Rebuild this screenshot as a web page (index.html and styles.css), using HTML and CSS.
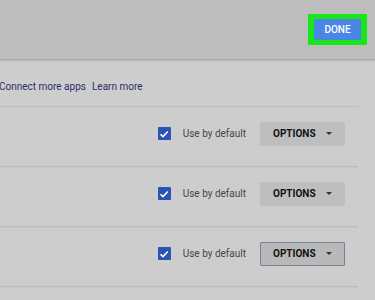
FILE: index.html
```html
<!DOCTYPE html>
<html>
<head>
<meta charset="utf-8">
<link rel="stylesheet" href="styles.css">
</head>
<body>
<header class="topbar">
  <div class="done-ring"><button class="done">DONE</button></div>
</header>
<div class="links"><span class="link">Connect more apps</span><span class="link">Learn more</span></div>
<div class="rows">
  <div class="row">
    <span class="check"><svg viewBox="0 0 12 12" width="12" height="12"><path d="M2.5 6.2 L5 8.6 L9.8 3.6" fill="none" stroke="#fff" stroke-width="1.5"/></svg></span>
    <span class="label">Use by default</span>
    <button class="options">OPTIONS<span class="caret"></span></button>
  </div>
  <div class="row">
    <span class="check"><svg viewBox="0 0 12 12" width="12" height="12"><path d="M2.5 6.2 L5 8.6 L9.8 3.6" fill="none" stroke="#fff" stroke-width="1.5"/></svg></span>
    <span class="label">Use by default</span>
    <button class="options">OPTIONS<span class="caret"></span></button>
  </div>
  <div class="row">
    <span class="check"><svg viewBox="0 0 12 12" width="12" height="12"><path d="M2.5 6.2 L5 8.6 L9.8 3.6" fill="none" stroke="#fff" stroke-width="1.5"/></svg></span>
    <span class="label">Use by default</span>
    <button class="options focused">OPTIONS<span class="caret"></span></button>
  </div>
</div>
</body>
</html>
```
FILE: styles.css
```css
html, body {
  margin: 0;
  padding: 0;
  background: #cdcdcd;
  font-family: Roboto, "Liberation Sans", sans-serif;
  width: 375px;
  height: 300px;
  overflow: hidden;
}
.topbar {
  height: 60px;
  background: #bdbdbd;
  border-bottom: 1px solid #a9a9a9;
  box-shadow: 0 1px 2px rgba(0,0,0,0.12);
  display: flex;
  justify-content: flex-end;
  align-items: flex-start;
  padding-right: 8px;
  box-sizing: border-box;
}
.done-ring {
  margin-top: 14px;
  background: #19e619;
  padding: 5px 6px 5px 6px;
  border-radius: 1px;
}
.done {
  display: block;
  width: 47px;
  height: 21px;
  border: 0;
  background: #4a86e6;
  color: #fff;
  font-family: Roboto, "Liberation Sans", sans-serif;
  font-weight: 500;
  font-size: 10px;
  padding: 0;
  border-radius: 1px;
}
.links {
  height: 47px;
  display: flex;
  align-items: center;
  gap: 6px;
  margin-left: -1px;
  padding-top: 6px;
  box-sizing: border-box;
  border-bottom: 1px solid #bdbdbd;
  width: 359px;
}
.link {
  color: #2b2d6b;
  font-size: 10px;
}
.rows {
  width: 358px;
}
.row {
  height: 53px;
  border-bottom: 1px solid #bcbcbc;
  box-shadow: 0 1px 0 #c6c6c6;
  display: flex;
  align-items: center;
  justify-content: flex-end;
  padding-right: 13px;
  padding-bottom: 6px;
}
.check {
  width: 13px;
  height: 13px;
  background: #2a53b5;
  border-radius: 1px;
  display: flex;
  align-items: center;
  justify-content: center;
  margin-right: 12px;
}
.check svg { display: block; }
.label {
  color: #454545;
  font-size: 10px;
  margin-right: 14px;
}
.options {
  width: 85px;
  height: 24px;
  border: 0;
  background: #bebebe;
  color: #111;
  font-family: Roboto, "Liberation Sans", sans-serif;
  font-weight: 700;
  font-size: 10px;
  display: flex;
  align-items: center;
  padding: 0 0 0 13px;
  box-sizing: border-box;
  border-radius: 1px;
}
.options.focused {
  border: 1px solid #7c7f9a;
  background: #b9b9b9;
  padding-left: 12px;
}
.caret {
  width: 0;
  height: 0;
  border-left: 3px solid transparent;
  border-right: 3px solid transparent;
  border-top: 3px solid #333;
  margin-left: 10px;
}
```
